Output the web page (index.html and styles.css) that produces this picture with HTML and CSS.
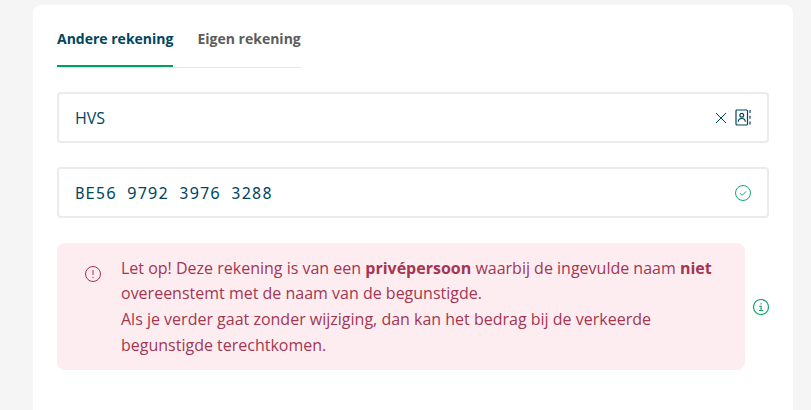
FILE: index.html
```html
<!DOCTYPE html>
<html lang="nl">
<head>
    <meta charset="UTF-8">
    <meta name="viewport" content="width=device-width, initial-scale=1.0">
    <title>Overschrijving</title>
    <link rel="stylesheet" href="styles.css">
</head>
<body>
    <div class="card">
        <div class="tabs">
            <div class="tab tab-active">Andere rekening</div>
            <div class="tab">Eigen rekening</div>
        </div>

        <div class="field">
            <span class="field-value">HVS</span>
            <svg class="icon icon-close" viewBox="0 0 12 12" width="12" height="12">
                <path d="M1 1l10 10M11 1L1 11" />
            </svg>
            <svg class="icon icon-contacts" viewBox="0 0 16 17" width="16" height="17">
                <rect x="1" y="1" width="11.5" height="15" rx="1" />
                <circle cx="6.8" cy="6.3" r="1.9" />
                <path d="M3.3 12.8c0-2.3 1.5-3.3 3.5-3.3s3.5 1 3.5 3.3" />
                <path d="M15 1v3M15 6.8v3M15 12.5v3" />
            </svg>
        </div>

        <div class="field field-iban-row">
            <span class="field-value field-iban">BE56 9792 3976 3288</span>
            <svg class="icon icon-ok" viewBox="0 0 16 16" width="16" height="16">
                <circle cx="8" cy="8" r="7.5" />
                <path d="M5 8.3l2.2 2 4-4" />
            </svg>
        </div>

        <div class="alert-row">
            <div class="alert">
                <svg class="icon icon-alert" viewBox="0 0 16 16" width="16" height="16">
                    <circle cx="8" cy="8" r="7.5" />
                    <path d="M8 4v5M8 10.8v1.3" />
                </svg>
                <p class="alert-text">Let op! Deze rekening is van een <b>privépersoon</b> waarbij de ingevulde naam <b>niet</b> overeenstemt met de naam van de begunstigde.<br>Als je verder gaat zonder wijziging, dan kan het bedrag bij de verkeerde begunstigde terechtkomen.</p>
            </div>
            <svg class="icon icon-info" viewBox="0 0 16 16" width="16" height="16">
                <circle cx="8" cy="8" r="7.5" />
                <path d="M6.3 7.3H8.1V11.5M6 11.5h4.2M8 4.2v1.4" />
            </svg>
        </div>
    </div>
</body>
</html>
```

FILE: styles.css
```css
html, body {
    height: 100%;
}

body {
    margin: 0;
    padding: 5px 18px 0 33px;
    box-sizing: border-box;
    overflow: hidden;
    background-color: #f5f5f5;
    font-family: "Open Sans", sans-serif;
}

.card {
    height: 100%;
    padding: 14px 24px 0;
    box-sizing: border-box;
    background-color: #fff;
    border-radius: 8px 8px 0 0;
}

.tabs {
    display: flex;
    width: 244px;
    margin-bottom: 24px;
    border-bottom: 1px solid #e9e9e9;
}

.tab {
    height: 48px;
    margin-right: 24px;
    box-sizing: border-box;
    padding-top: 10px;
    font-size: 14px;
    line-height: 20px;
    font-weight: 700;
    color: #5c5c5c;
    white-space: nowrap;
}

.tab:last-child {
    margin-right: 0;
}

.tab-active {
    color: #00465f;
    border-bottom: 2px solid #00a05f;
}

.field {
    display: flex;
    align-items: center;
    height: 51px;
    margin-bottom: 24px;
    padding: 0 16px;
    box-sizing: border-box;
    border: 2px solid #ebebeb;
    border-radius: 4px;
}

.field-iban-row {
    margin-bottom: 25.4px;
    padding-top: 1px;
}

.field-value {
    flex: 1;
    font-size: 16px;
    color: #00465f;
}

.field-iban {
    font-family: "Noto Sans Mono", "DejaVu Sans Mono", monospace;
    font-size: 16px;
    letter-spacing: 0.8px;
}

.icon {
    flex-shrink: 0;
    fill: none;
    stroke-width: 1;
}

.icon-close {
    stroke: #00465f;
    margin-right: 8px;
    margin-top: 1px;
}

.icon-contacts {
    stroke: #00465f;
    stroke-width: 1.2;
}

.icon-ok {
    stroke: #14a870;
}

.alert-row {
    display: flex;
    align-items: center;
}

.alert {
    display: flex;
    width: 688px;
    padding: 12px 16px 12px 28px;
    box-sizing: border-box;
    background-color: #fdedf0;
    border-radius: 8px;
}

.icon-alert {
    stroke: #a6304f;
    margin: 11px 20px 0 0;
}

.alert-text {
    margin: 0.5px 0 0;
    font-size: 16px;
    line-height: 25.6px;
    color: #a33650;
}

.icon-info {
    stroke: #14a870;
    stroke-width: 1.2;
    margin-left: 8px;
}
```
